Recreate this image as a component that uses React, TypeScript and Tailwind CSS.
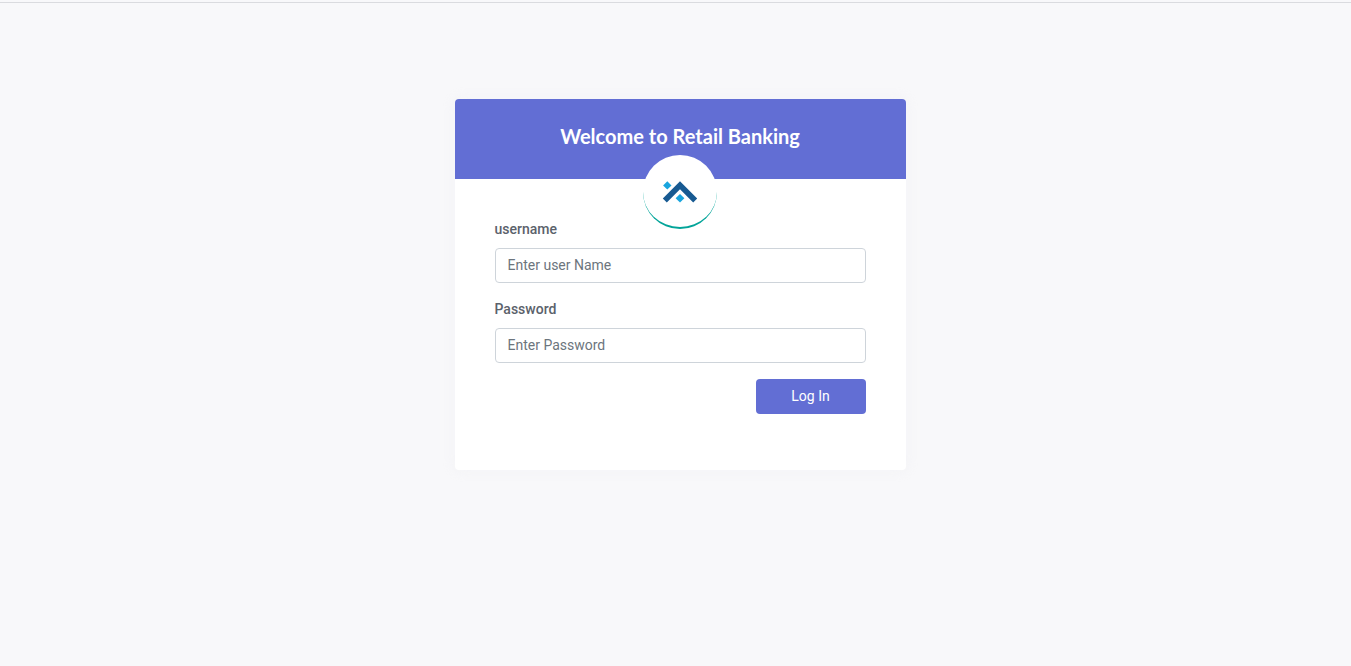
import React from 'react';

function Logo() {
  return (
    <svg width="36" height="24" viewBox="0 0 36 24" aria-hidden="true">
      <path d="M18 1.3 L35.2 18.5 L31.2 22.5 L18 9.3 L4.8 22.5 L0.8 18.5 Z" fill="#175a92" />
      <path d="M5.3 1.2 L9.5 5.4 L5.3 9.6 L1.1 5.4 Z" fill="#19a5de" />
      <path d="M18 13.9 L22.4 18.2 L18 22.5 L13.6 18.2 Z" fill="#19a5de" />
    </svg>
  );
}

interface FieldProps {
  id: string;
  label: string;
  placeholder: string;
  type: string;
}

function Field({ id, label, placeholder, type }: FieldProps) {
  return (
    <div className="mb-4 flex flex-col">
      <label htmlFor={id} className="mb-2 h-[21px] text-sm leading-[21px] font-medium text-[#5b626b]">
        {label}
      </label>
      <input
        id={id}
        type={type}
        placeholder={placeholder}
        className="h-[35px] w-full rounded border border-[#ced4da] bg-white px-3 pb-[2px] text-sm text-[#495057] outline-none placeholder:text-[#6c757d]"
      />
    </div>
  );
}

export default function App() {
  return (
    <div className="min-h-screen bg-[#f8f8fa] pt-[2px] font-['Roboto',sans-serif]">
      <div className="h-px bg-[#dadbdf]" />
      <main className="flex justify-center pt-24 pl-[9px]">
        <section className="h-[371px] w-[451px] overflow-hidden rounded bg-white shadow-[0_0_13px_0_rgba(236,236,241,0.44)]">
          <header className="relative flex h-20 justify-center bg-[#626ed4] pt-[25px]">
            <h1 className="h-6 text-[20px] leading-6 font-bold whitespace-nowrap text-white font-['Lato',sans-serif]">
              Welcome to Retail Banking
            </h1>
            <div className="absolute top-14 left-[188px] flex size-[74px] items-center justify-center rounded-full border-b-2 border-[#02a499] bg-white pt-[2px]">
              <Logo />
            </div>
          </header>
          <form className="px-10 pt-[40px]" onSubmit={(e) => e.preventDefault()}>
            <Field id="username" label="username" placeholder="Enter user Name" type="text" />
            <Field id="password" label="Password" placeholder="Enter Password" type="password" />
            <div className="flex justify-end">
              <button className="h-[35px] w-[110px] rounded bg-[#626ed4] pb-[2px] text-sm text-white" type="submit">
                Log In
              </button>
            </div>
          </form>
        </section>
      </main>
    </div>
  );
}
